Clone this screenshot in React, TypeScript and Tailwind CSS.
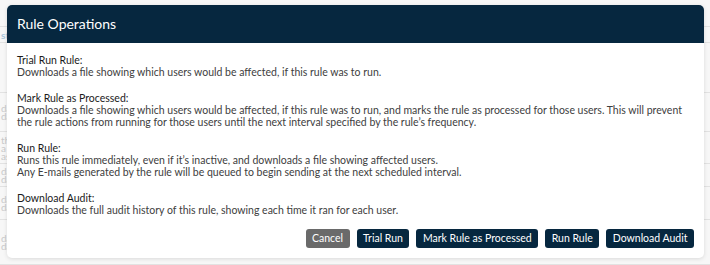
import React from "react";

const sections = [
  {
    title: "Trial Run Rule:",
    lines: ["Downloads a file showing which users would be affected, if this rule was to run."],
  },
  {
    title: "Mark Rule as Processed:",
    lines: [
      "Downloads a file showing which users would be affected, if this rule was to run, and marks the rule as processed for those users. This will prevent",
      "the rule actions from running for those users until the next interval specified by the rule\u2019s frequency.",
    ],
  },
  {
    title: "Run Rule:",
    lines: [
      "Runs this rule immediately, even if it\u2019s inactive, and downloads a file showing affected users.",
      "Any E-mails generated by the rule will be queued to begin sending at the next scheduled interval.",
    ],
  },
  {
    title: "Download Audit:",
    lines: ["Downloads the full audit history of this rule, showing each time it ran for each user."],
  },
];

const bgRows = [
  { h: 27, t: "" },
  { h: 16, t: "st", blue: true },
  { h: 50, t: "" },
  { h: 39, t: "da\nda" },
  { h: 32, t: "th\na i\nas" },
  { h: 23, t: "da\nda" },
  { h: 33, t: "da\nda" },
  { h: 45, t: "da\nda" },
];

export default function App() {
  return (
    <div
      className="relative w-[710px] h-[265px] overflow-hidden bg-[#f1f1f1]"
      style={{ fontFamily: "Lato, 'Open Sans', Arial, sans-serif" }}
    >
      {/* background page */}
      <div className="flex flex-col w-full">
        {bgRows.map((r, i) => (
          <div
            key={i}
            className="border-b border-[#e2e2e2] bg-[#f7f7f7] text-[10px] leading-[8px] text-[#c9c9c9] whitespace-pre pl-[1px] flex items-center"
            style={{ height: r.h }}
          >
            <span className={r.blue ? "text-[#a9c6dc] font-bold" : ""}>{r.t}</span>
          </div>
        ))}
      </div>

      {/* dialog */}
      <div className="absolute left-[7px] top-[5px] w-[697px] h-[253px] bg-white rounded-[5px] shadow-[0_1px_4px_rgba(0,0,0,0.12)] flex flex-col overflow-hidden">
        <div className="h-[38px] bg-[#06273f] flex items-center px-[10px] shrink-0">
          <span className="text-white text-[14px] leading-none">Rule Operations</span>
        </div>
        <div className="flex-1 flex flex-col px-[10px] pt-[11px] pb-[10px]">
          <div className="flex-1 flex flex-col gap-[14px] text-[10.5px] leading-[12px] text-[#404040]">
            {sections.map((s) => (
              <div key={s.title} className="flex flex-col">
                <span className="text-[#1a1a1a]">{s.title}</span>
                {s.lines.map((l) => (
                  <span key={l}>{l}</span>
                ))}
              </div>
            ))}
          </div>
          <div className="flex justify-end gap-[7px] text-[10.5px] text-white">
            <button className="h-[19px] px-[6.5px] rounded-[3px] bg-[#6a6a6a]">Cancel</button>
            <button className="h-[19px] px-[6.5px] rounded-[3px] bg-[#06273f]">Trial Run</button>
            <button className="h-[19px] px-[6.5px] rounded-[3px] bg-[#06273f]">Mark Rule as Processed</button>
            <button className="h-[19px] px-[6.5px] rounded-[3px] bg-[#06273f]">Run Rule</button>
            <button className="h-[19px] px-[6.5px] rounded-[3px] bg-[#06273f]">Download Audit</button>
          </div>
        </div>
      </div>
    </div>
  );
}
